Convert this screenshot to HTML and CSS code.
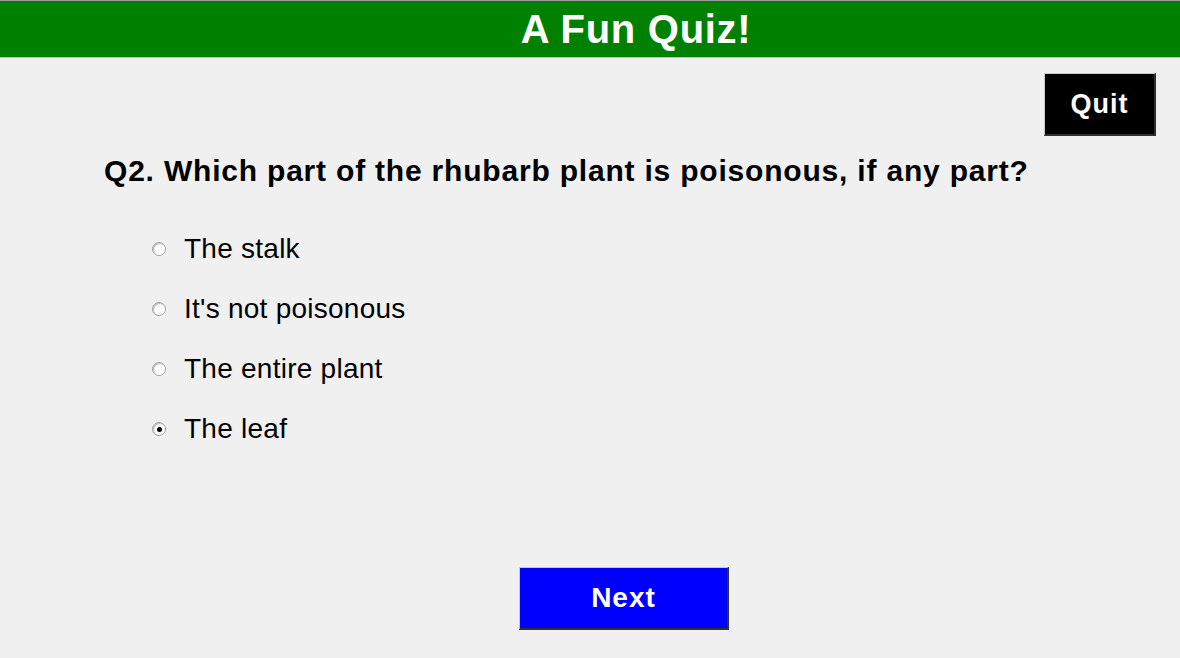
FILE: index.html
```html
<!DOCTYPE html>
<html lang="en">
<head>
<meta charset="utf-8">
<title>A Fun Quiz!</title>
<link rel="stylesheet" href="styles.css">
</head>
<body>
<header class="titlebar">
  <h1 class="title">A Fun Quiz!</h1>
</header>
<div class="toolbar">
  <button class="btn quit" type="button">Quit</button>
</div>
<main class="quiz">
  <h2 class="question">Q2. Which part of the rhubarb plant is poisonous, if any part?</h2>
  <ul class="options">
    <li class="option"><span class="radio"></span><span class="label">The stalk</span></li>
    <li class="option"><span class="radio"></span><span class="label">It's not poisonous</span></li>
    <li class="option"><span class="radio"></span><span class="label">The entire plant</span></li>
    <li class="option"><span class="radio checked"></span><span class="label">The leaf</span></li>
  </ul>
</main>
<div class="footer">
  <button class="btn next" type="button">Next</button>
</div>
</body>
</html>
```
FILE: styles.css
```css
html, body {
  margin: 0;
  padding: 0;
}
body {
  width: 1180px;
  height: 658px;
  overflow: hidden;
  background: #f0f0f0;
  font-family: "Liberation Sans", Arial, sans-serif;
  color: #000;
}
.titlebar {
  background: #008000;
  border-top: 1px solid #9a9a9a;
  border-bottom: 1px solid #b8c8b8;
  height: 56px;
  display: flex;
  align-items: center;
  justify-content: center;
  padding-left: 92px;
}
.title {
  margin: 0;
  color: #fff;
  font-size: 40px;
  font-weight: bold;
  letter-spacing: 0.7px;
  line-height: 1;
}
.toolbar {
  display: flex;
  justify-content: flex-end;
  padding: 15px 24px 0 0;
}
.btn {
  font-family: "Liberation Sans", Arial, sans-serif;
  font-weight: bold;
  color: #fff;
  border-style: solid;
  border-width: 1px 2px 2px 1px;
  border-color: #c8c8c8 #303030 #303030 #c8c8c8;
  padding: 0;
  display: flex;
  align-items: center;
  justify-content: center;
}
.quit {
  width: 112px;
  height: 63px;
  background: #000;
  font-size: 27px;
  letter-spacing: 1px;
}
.quiz {
  padding: 18px 0 0 104px;
}
.question {
  margin: 0;
  font-size: 30px;
  font-weight: bold;
  line-height: 34px;
  letter-spacing: 0.8px;
}
.options {
  list-style: none;
  margin: 45px 0 0 0;
  padding: 0 0 0 48px;
  display: flex;
  flex-direction: column;
  gap: 28px;
}
.option {
  display: flex;
  align-items: center;
  height: 32px;
  font-size: 28px;
}
.label {
  letter-spacing: 0.25px;
}
.radio {
  width: 12px;
  height: 12px;
  border-radius: 50%;
  background: #fff;
  border: 1px solid #a0a0a0;
  box-shadow: inset 1px 1px 1px #b8b8b8;
  margin-right: 18px;
  display: flex;
  align-items: center;
  justify-content: center;
  flex: none;
}
.radio.checked::after {
  content: "";
  width: 5px;
  height: 5px;
  border-radius: 50%;
  background: #000;
}
.footer {
  display: flex;
  justify-content: center;
  padding: 0 0 0 68px;
  margin-top: 122px;
}
.next {
  width: 210px;
  height: 63px;
  background: #0000ff;
  font-size: 28px;
  letter-spacing: 1px;
}
```
